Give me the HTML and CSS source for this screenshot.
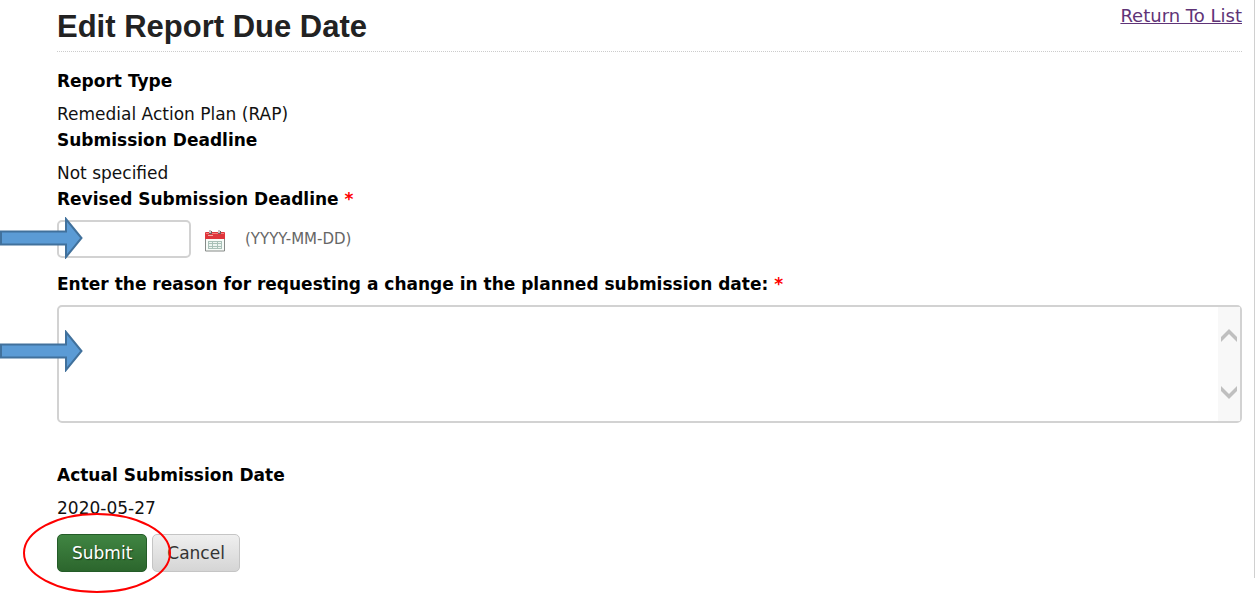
FILE: index.html
```html
<!DOCTYPE html>
<html lang="en">
<head>
<meta charset="utf-8">
<title>Edit Report Due Date</title>
<link rel="stylesheet" href="styles.css">
</head>
<body>
<main class="page">
  <header class="page-header">
    <h1 class="page-title">Edit Report Due Date</h1>
    <a class="return-link" href="#list">Return To List</a>
  </header>
  <form class="form">
    <dl class="details">
      <dt class="label">Report Type</dt>
      <dd class="value">Remedial Action Plan (RAP)</dd>
      <dt class="label">Submission Deadline</dt>
      <dd class="value">Not specified</dd>
    </dl>
    <div class="field">
      <label class="label" for="deadline">Revised Submission Deadline <span class="required">*</span></label>
      <div class="date-row">
        <input class="box date-input" id="deadline" type="text">
        <button class="calendar" type="button" aria-label="Choose date">
          <svg width="20" height="22" viewBox="0 0 20 22">
            <path d="M.5 8h19v13H.5z" fill="#f7fbf8" stroke="#868a88"/>
            <path d="M0 3q0-1 1-1h18q1 0 1 1v6H0z" fill="#df353b"/>
            <path d="M1 3h18v1H1z" fill="#f47a78"/>
            <path d="M3 5h5v1H3z" fill="#f4aaa6"/>
            <path d="M4 1h3v3H4zM13 1h3v3h-3z" fill="#77595a"/>
            <path d="M4 0h2v3H4zM13 0h2v3h-2z" fill="#c9c1c1"/>
            <path d="M3 11h14v8H3z" fill="#a9c1b8"/>
            <path d="M4 12h3v1H4zM8 12h4v1H8zM13 12h3v1h-3zM4 14h3v2H4zM8 14h4v2H8zM13 14h3v2h-3zM4 17h3v1H4zM8 17h4v1H8zM13 17h3v1h-3z" fill="#edf5f1"/>
          </svg>
        </button>
        <span class="hint">(YYYY-MM-DD)</span>
        <svg class="arrow" width="84" height="42" viewBox="0 0 84 42"><path d="M1 14.500H66V2L81.500 21 66 40V27.500H1z" fill="#5b9bd5" stroke="#41719c" stroke-width="2"/></svg>
      </div>
    </div>
    <div class="field">
      <label class="label" for="reason">Enter the reason for requesting a change in the planned submission date: <span class="required">*</span></label>
      <div class="reason-row">
        <textarea class="box reason" id="reason"></textarea>
        <div class="scroll-track" aria-hidden="true">
          <svg width="16" height="13" viewBox="0 0 16 13"><path d="M0 8 8 0l8 8v5L8 5l-8 8z" fill="#bfbfbf"/></svg>
          <svg width="16" height="13" viewBox="0 0 16 13"><path d="M0 0l8 8 8-8v5l-8 8-8-8z" fill="#bfbfbf"/></svg>
        </div>
        <svg class="arrow" width="84" height="42" viewBox="0 0 84 42"><path d="M1 14.500H66V2L81.500 21 66 40V27.500H1z" fill="#5b9bd5" stroke="#41719c" stroke-width="2"/></svg>
      </div>
    </div>
    <dl class="details actual">
      <dt class="label">Actual Submission Date</dt>
      <dd class="value">2020-05-27</dd>
    </dl>
    <div class="actions">
      <button class="btn primary" type="submit">Submit</button>
      <button class="btn" type="button">Cancel</button>
      <svg class="ring" width="148" height="82" viewBox="0 0 148 82"><ellipse cx="74" cy="41" rx="73" ry="39" fill="none" stroke="#fe0000" stroke-width="2"/></svg>
    </div>
  </form>
</main>
</body>
</html>
```
FILE: styles.css
```css
* { box-sizing: border-box; }
body {
  margin: 0;
  padding-bottom: 15px;
  background: #fff;
  color: #111;
  font-family: "DejaVu Sans", Verdana, sans-serif;
  font-size: 17px;
  line-height: 24px;
}
.page {
  padding: 4px 12px 6px 57px;
  border-right: 1px solid #d0d0d0;
}
.page-header {
  display: flex;
  justify-content: space-between;
  align-items: flex-start;
  height: 48px;
  border-bottom: 1px dotted #ccc;
}
.page-title {
  margin: 3px 0 0;
  color: #222;
  font: bold 31px/40px "Liberation Sans", Arial, sans-serif;
}
.return-link { color: #5f3477; font-size: 18px; }
.form { padding-top: 17px; }
.details { margin: 0; }
.label {
  display: block;
  color: #000;
  font-size: 17px;
  font-weight: bold;
}
.required { color: #f00; }
.value { margin: 9px 0 2px; }
.field { margin-bottom: 14px; }
.date-row {
  position: relative;
  display: flex;
  align-items: center;
  margin-top: 9px;
}
.box {
  border: 2px solid #d2d2d2;
  border-radius: 5px;
  background: #fff;
  font: inherit;
}
.date-input {
  width: 134px;
  height: 38px;
  padding: 0 8px;
}
.calendar {
  display: flex;
  margin: 4px 20px 0 14px;
  padding: 0;
  border: 0;
  background: none;
}
.hint { color: #666; font-size: 15px; }
.arrow {
  position: absolute;
  left: -57px;
  top: -3px;
}
.reason-row {
  position: relative;
  margin-top: 9px;
}
.reason {
  display: block;
  width: 100%;
  height: 118px;
  padding: 8px 32px 8px 8px;
  resize: none;
}
.scroll-track {
  position: absolute;
  top: 2px;
  right: 2px;
  bottom: 2px;
  width: 22px;
  display: flex;
  flex-direction: column;
  justify-content: space-between;
  align-items: center;
  padding: 22px 0;
  background: #f8f8f8;
}
.reason-row .arrow { top: 25px; }
.actual { margin-top: 40px; }
.actions {
  position: relative;
  display: flex;
  gap: 5px;
  margin-top: 14px;
}
.btn {
  height: 38px;
  padding: 0 14px;
  border: 1px solid #c5c5c5;
  border-radius: 5px;
  background: linear-gradient(#efefef, #d5d5d5);
  color: #333;
  font: inherit;
}
.primary {
  border-color: #245c28;
  background: linear-gradient(#408542, #2c662d);
  color: #fff;
  text-shadow: 1px 1px 1px #173b18;
}
.ring {
  position: absolute;
  left: -34px;
  top: -22px;
  pointer-events: none;
}
```
